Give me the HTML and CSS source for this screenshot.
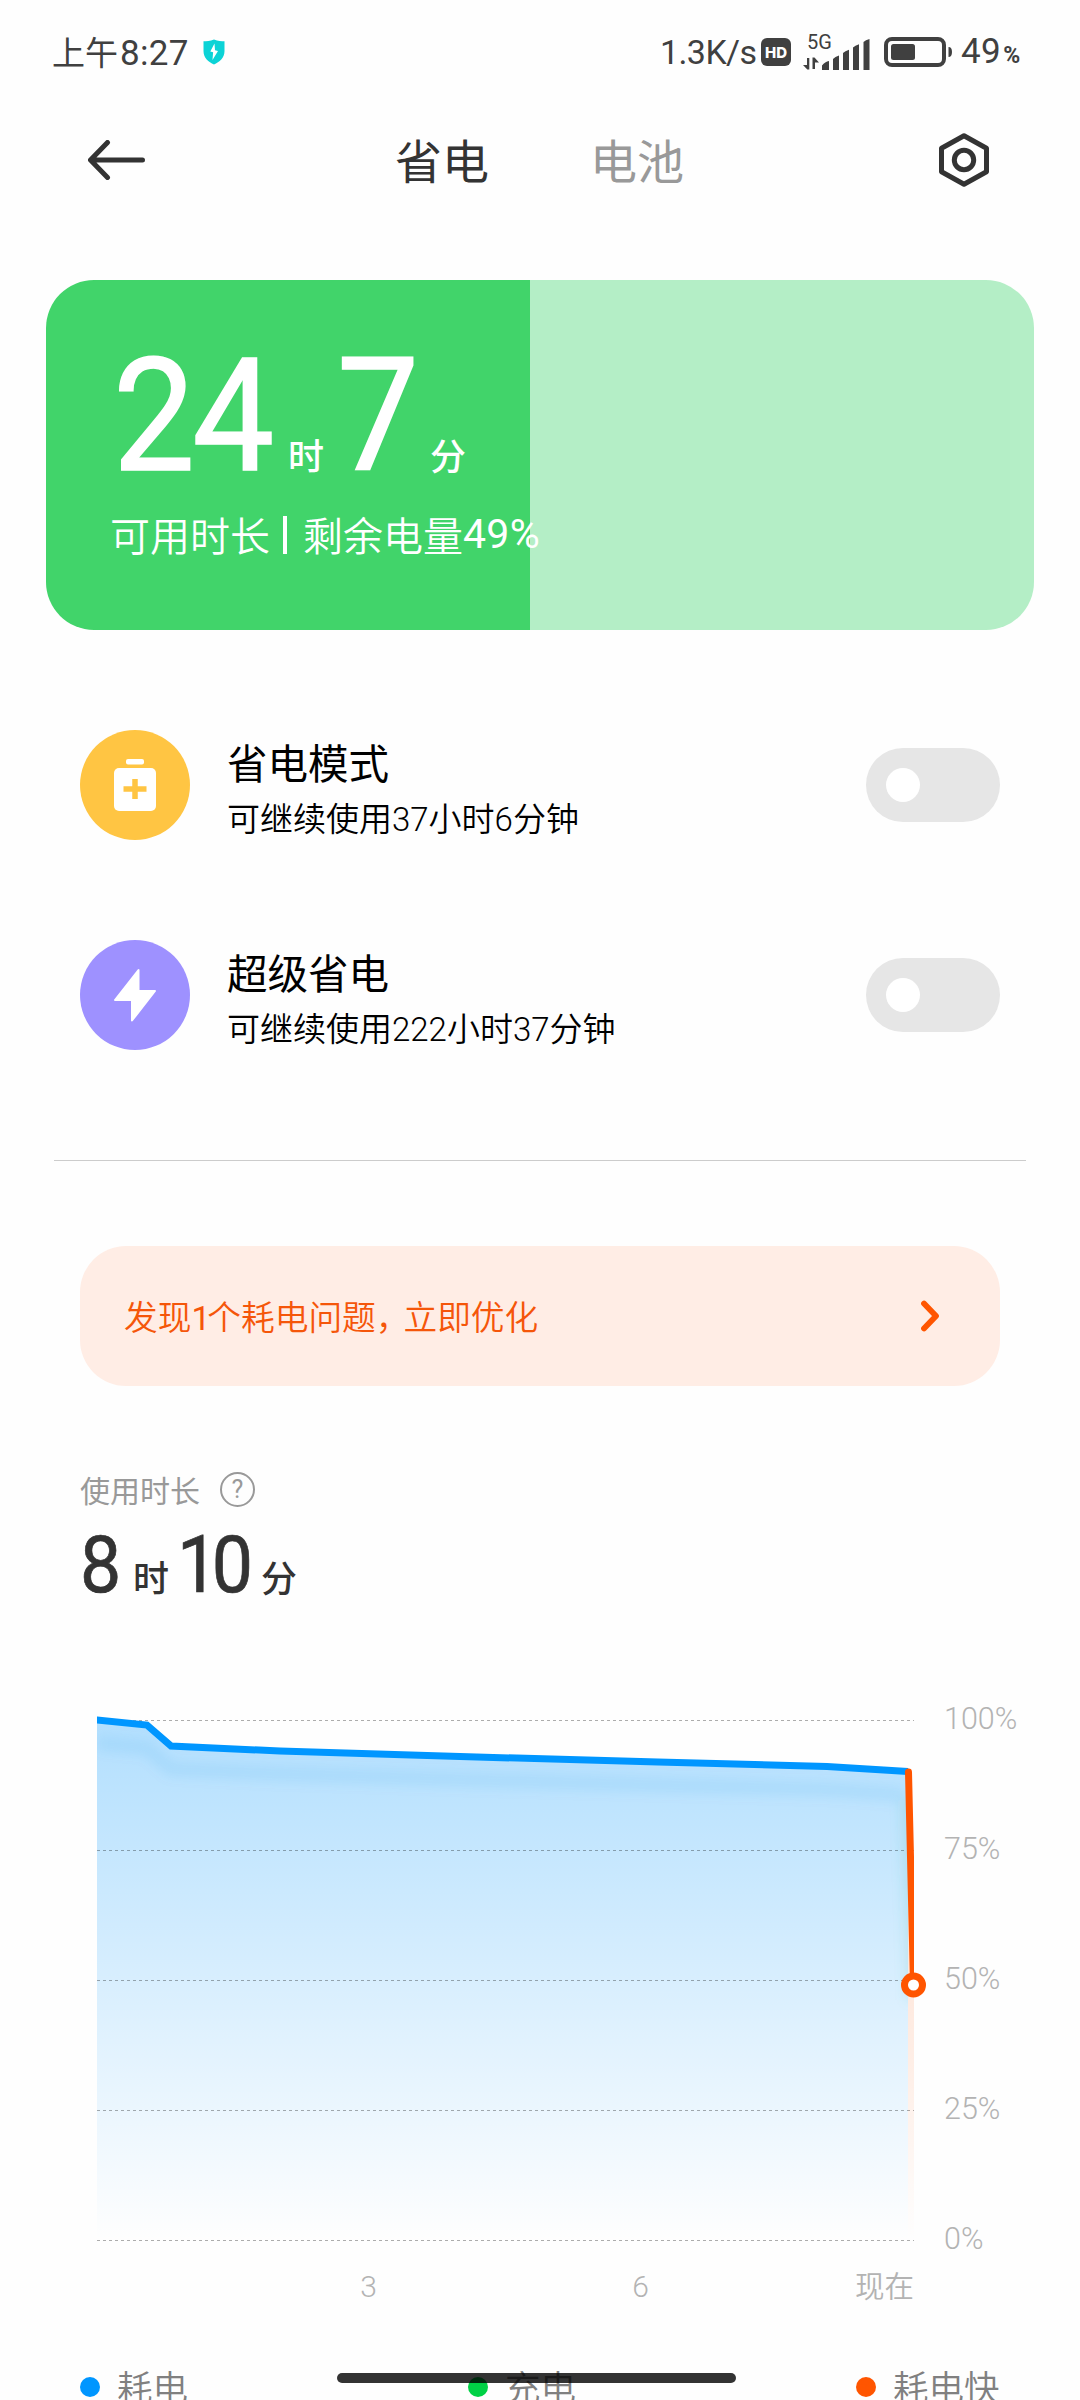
FILE: index.html
```html
<!DOCTYPE html>
<html lang="zh-CN">
<head>
<meta charset="utf-8">
<title>省电与电池</title>
<link rel="stylesheet" href="styles.css">
</head>
<body>
<div class="screen">
  <header class="status">
    <span class="clock">上午<span class="clock-num">8:27</span></span>
    <svg class="shield" width="24" height="26" viewBox="0 0 24 26"><path d="M12 .5C8 2 4.500 2.200 1.500 2.200V12c0 7 5 11 10.500 13.500C17.500 23 22.500 19 22.500 12V2.200C19.500 2.200 16 2 12 .5Z" fill="#0cd3d6"/><path d="M12.500 4.500 8.300 12.500l2.800.8L10.500 21 16 12l-3-.8Z" fill="#fff"/></svg>
    <span class="speed">1.3K/s</span>
    <span class="hd">HD</span>
    <span class="signal">
      <span class="gen">5G</span>
      <svg class="bars" width="68" height="31" viewBox="0 0 68 31" fill="#404040"><path d="M4 19h2.300v11.500H4.300L0 26h4zM9.500 30V18.500h2L16 23.500h-4V30z"/><path d="M19 31v-4.500q3-4 7-4.500v9zM30 31V20q2-2.500 6-3.500V31zM40 31V14q2-2 6-3.200V31zM50 31V8.500q2-2 6-3.300V31zM60.500 31V3q2-2 6-3v31z"/></svg>
    </span>
    <svg class="battery" width="68" height="30" viewBox="0 0 68 30"><rect x="2" y="2" width="58" height="26" rx="6" fill="none" stroke="#404040" stroke-width="4"/><rect x="7" y="7" width="24" height="16" rx="2.500" fill="#404040"/><path d="M64.500 10q3.500 0 3.500 5t-3.500 5z" fill="#404040"/></svg>
    <span class="charge">49<small>%</small></span>
  </header>

  <nav class="topbar">
    <svg class="back" width="57" height="40" viewBox="0 0 57 40" fill="none" stroke="#333" stroke-width="5" stroke-linecap="round" stroke-linejoin="round"><path d="M19.500 2.500 2.500 20l17 17.500M3 20h51.500"/></svg>
    <span class="tab tab-on">省电</span>
    <span class="tab">电池</span>
    <svg class="gear" width="50" height="54" viewBox="0 0 50 54" fill="none" stroke="#333" stroke-width="5" stroke-linejoin="round"><path d="M25 2.700 47.500 15.200v23.600L25 51.300 2.500 38.800V15.200Z"/><circle cx="25" cy="27" r="9.700"/></svg>
  </nav>

  <section class="card">
    <div class="time time-big"><b class="n24">24</b><i>时</i><b class="n7">7</b><i>分</i></div>
    <p class="remain">可用时长<span class="bar"></span>剩余电量<span class="pct">49%</span></p>
  </section>

  <section class="modes">
    <div class="mode">
      <svg class="badge" width="110" height="110" viewBox="0 0 110 110"><circle cx="55" cy="55" r="55" fill="#ffc543"/><rect x="46" y="29" width="18" height="5.500" rx="2" fill="#fff"/><rect x="34" y="38" width="42" height="43" rx="5" fill="#fff"/><path d="M55 49v20M43.500 59H66.500" stroke="#ffc543" stroke-width="5.500"/></svg>
      <div class="mode-text"><h2>省电模式</h2><p>可继续使用37小时6分钟</p></div>
      <span class="toggle"></span>
    </div>
    <div class="mode">
      <svg class="badge" width="110" height="110" viewBox="0 0 110 110"><circle cx="55" cy="55" r="55" fill="#9e91ff"/><path d="M58.500 30v21H75L52 80.500V60H35Z" fill="#fff" stroke="#fff" stroke-width="2" stroke-linejoin="round"/></svg>
      <div class="mode-text"><h2>超级省电</h2><p>可继续使用222小时37分钟</p></div>
      <span class="toggle"></span>
    </div>
  </section>

  <hr class="divider">

  <section class="notice">
    <span class="notice-text">发现<span class="one">1</span>个耗电问题<span class="comma">，</span>立即优化</span>
    <svg width="19" height="32" viewBox="0 0 19 32" fill="none" stroke="#ff5500" stroke-width="5.800" stroke-linecap="round" stroke-linejoin="round"><path d="M3 3.500 15 16 3 28.500"/></svg>
  </section>

  <section class="usage">
    <div class="usage-head">使用时长<span class="help">?</span></div>
    <div class="time time-small"><b class="n8">8</b><i>时</i><b class="n10">10</b><i>分</i></div>
  </section>

  <section class="chart">
    <svg class="plot" width="840" height="540" viewBox="0 0 840 540">
      <defs>
        <linearGradient id="drain" x1="0" y1="10" x2="0" y2="530" gradientUnits="userSpaceOnUse"><stop offset="0" stop-color="#0096ff" stop-opacity=".3"/><stop offset="1" stop-color="#0096ff" stop-opacity="0"/></linearGradient>
        <linearGradient id="fast" x1="0" y1="60" x2="0" y2="530" gradientUnits="userSpaceOnUse"><stop offset="0" stop-color="#ff5500" stop-opacity=".2"/><stop offset=".6" stop-color="#ff5500" stop-opacity=".1"/><stop offset="1" stop-color="#ff5500" stop-opacity="0"/></linearGradient>
        <clipPath id="area"><path d="M0 10 50 15 74 36 183 41 363 46.500 561 52 730 56.500 811 62V530H0Z"/></clipPath>
        <clipPath id="frame"><path d="M0 0H817V540H0Z"/></clipPath>
        <filter id="soft" x="-10%" y="-80%" width="120%" height="260%"><feGaussianBlur stdDeviation="6"/></filter>
      </defs>
      <path d="M0 10 50 15 74 36 183 41 363 46.500 561 52 730 56.500 811 62V530H0Z" fill="url(#drain)"/>
      <path d="M811 62 817 275V530H811Z" fill="url(#fast)"/>
      <g clip-path="url(#area)" fill="none" filter="url(#soft)"><path d="M0 33 50 38 74 59 183 64 363 69.500 561 75 730 79.500 808 85" stroke="#0090e0" stroke-opacity=".09" stroke-width="14"/><path d="M810 90 816 290" stroke="#40b0a0" stroke-opacity=".17" stroke-width="12"/></g>
      <path d="M0 10.500H817M0 140.500H817M0 270.500H817M0 400.500H817M0 530.500H817" stroke="#000" stroke-opacity=".32" stroke-dasharray="3 3"/>
      <g clip-path="url(#frame)" fill="none" stroke-width="7"><path d="M-4 9.600 0 10 50 15 74 36 183 41 363 46.500 561 52 730 56.500 811 61.500" stroke="#0096ff"/><path d="M811.500 62 816.500 275" stroke="#ff5500" stroke-linecap="round"/></g>
      <circle cx="816.500" cy="275" r="9" fill="#fff" stroke="#ff5500" stroke-width="7"/>
    </svg>
    <div class="ylabels"><span>100%</span><span>75%</span><span>50%</span><span>25%</span><span>0%</span></div>
    <div class="xlabels"><span>3</span><span>6</span><span>现在</span></div>
  </section>

  <footer class="legend">
    <span class="key blue"><span>耗电</span></span><span class="key green"><span>充电</span></span><span class="key orange"><span>耗电快</span></span>
  </footer>
  <div class="homebar"></div>
</div>
</body>
</html>
```
FILE: styles.css
```css
* { box-sizing: border-box; margin: 0; padding: 0; }
body { background: #fefefe; }
.screen {
  position: relative;
  width: 1080px;
  height: 2400px;
  overflow: hidden;
  font-family: Roboto, "Noto Sans CJK SC", sans-serif;
  color: #333;
}
svg { display: block; flex: none; }

.status { display: flex; align-items: center; height: 104px; padding-left: 52px; color: #404040; font-size: 34px; line-height: 40px; }
.clock { display: flex; width: 150px; padding-top: 3px; font-size: 33px; white-space: nowrap; }
.clock-num { margin-left: 2px; font-size: 35px; letter-spacing: .3px; }
.shield { width: 24px; }
.speed { width: 99px; margin-left: 434px; letter-spacing: -.6px; }
.hd { width: 30px; height: 28px; margin-left: 2px; border-radius: 6px; background: #404040; color: #fff; font: 800 15px/29px Inter, sans-serif; text-align: center; }
.signal { display: flex; flex-direction: column; width: 68px; height: 36px; margin-left: 12px; }
.gen { height: 5px; padding-left: 4px; font-size: 20px; line-height: 16px; }
.battery { margin-left: 13px; }
.charge { margin-left: 9px; padding-top: 3px; font-size: 35px; letter-spacing: .4px; white-space: nowrap; }
.charge small { margin-left: 2px; font-size: 23px; font-weight: 700; }

.topbar { display: flex; align-items: center; height: 112px; padding: 0 91px 0 88px; }
.tab { width: 195px; padding-top: 5px; color: #999; font-size: 47px; line-height: 60px; }
.tab-on { margin-left: 250px; color: #333; }
.gear { margin-left: auto; }

.card { height: 350px; margin: 64px 46px 0; padding: 61px 0 0 63px; border-radius: 48px; background: linear-gradient(90deg, #41d46a 484px, #b4eec6 484px); color: #fff; }
.time { display: flex; align-items: baseline; white-space: nowrap; }
.time b { font-weight: 400; transform: scaleX(.93); transform-origin: left; }
.time i { font-style: normal; font-weight: 500; font-size: 36px; }
.time-big { height: 157px; padding-left: 4px; line-height: 150px; }
.time-big b { font-size: 157px; letter-spacing: -3px; -webkit-text-stroke: 1.500px #fff; }
.n24 { width: 175px; }
.n7 { width: 93px; margin-left: 13px; }
.remain { display: flex; align-items: center; height: 72px; padding-left: 1px; font-size: 40px; font-weight: 350; white-space: nowrap; }
.bar { width: 4px; height: 38px; margin: 2px 16px 0 13px; background: #fff; }
.pct { font-size: 41px; font-weight: 400; letter-spacing: .3px; }

.modes { display: flex; flex-direction: column; gap: 100px; padding: 100px 80px 0; }
.mode { display: flex; align-items: center; height: 110px; }
.mode-text { flex: 1; padding: 9px 0 0 37px; color: #000; }
.mode-text h2 { font-size: 40.500px; font-weight: 400; line-height: 60px; }
.mode-text p { font-size: 33px; font-weight: 350; line-height: 50px; white-space: nowrap; }
.toggle { width: 134px; height: 74px; padding: 20px; border-radius: 37px; background: #e6e6e6; }
.toggle::before { content: ""; display: block; width: 34px; height: 34px; border-radius: 50%; background: #fff; }

.divider { height: 1px; margin: 110px 54px 0; border: 0; background: #ccc; }

.notice { display: flex; align-items: center; justify-content: space-between; height: 140px; margin: 85px 80px 0; padding: 0 60px 0 44px; border-radius: 46px; background: #ffede5; color: #f5560a; font-size: 33.700px; font-weight: 350; }
.notice-text { margin-top: -2px; }
.one { font-weight: 400; letter-spacing: -3px; }
.comma { letter-spacing: -6px; }

.usage { height: 264px; padding: 80px 80px 0; }
.usage-head { display: flex; align-items: center; height: 46px; color: #999; font-size: 30px; }
.help { width: 35px; height: 35px; margin-left: 20px; border: 2px solid #999; border-radius: 50%; font-size: 25px; line-height: 31px; text-align: center; }
.time-small { height: 90px; padding-top: 8px; line-height: 90px; }
.time-small b { font-size: 79px; letter-spacing: -7px; -webkit-text-stroke: .7px #333; }
.n8 { width: 53px; }
.n10 { width: 84px; margin-left: 8px; }

.chart { display: grid; grid-template: 540px 60px / 847px 1fr; height: 650px; margin: 60px 0 0 97px; color: #b3b3b3; font-size: 30.500px; font-weight: 350; }
.ylabels { display: flex; flex-direction: column; justify-content: space-between; height: 556px; margin-top: -9px; line-height: 36px; }
.xlabels { display: grid; grid-template-columns: 272px 272px 273px; width: 817px; padding-top: 17px; line-height: 40px; font-size: 30px; }
.xlabels span { transform: translateX(8px); text-align: right; }
.xlabels span:last-child { transform: none; font-size: 29.500px; }

.legend { display: flex; height: 60px; padding-left: 80px; color: #808080; font-size: 35.500px; font-weight: 350; line-height: 56px; }
.key { display: flex; flex: none; align-items: center; width: 388px; height: 54px; white-space: nowrap; }
.key span { padding-top: 4px; }
.key::before { content: ""; flex: none; width: 20px; height: 20px; margin-right: 17px; border-radius: 50%; }
.blue::before { background: #0096ff; }
.green::before { background: #00d145; }
.orange::before { background: #ff5500; }
.orange { width: 160px; }
.homebar { position: absolute; left: 337px; top: 2373px; width: 399px; height: 10px; border-radius: 5px; background: rgba(0, 0, 0, .8); }
```
